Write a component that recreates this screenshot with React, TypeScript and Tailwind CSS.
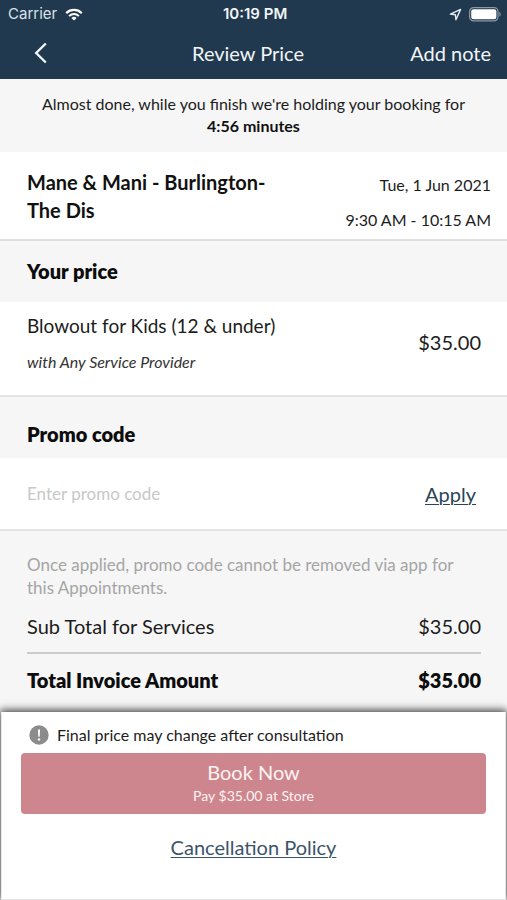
import type { ReactNode } from "react";

function StatusBar() {
  return (
    <div className="relative flex h-[26px] items-center justify-between pt-[2px] pr-[6px] pl-2 font-['Inter'] text-[15px] leading-5">
      <div className="flex items-center gap-2">
        <span className="text-[#dbe3ea]">Carrier</span>
        <svg width="18" height="13" viewBox="0 0 18 13" fill="none" stroke="white">
          <path d="M1.2 5.1a11.2 11.2 0 0 1 15.6 0" strokeWidth="2.2" />
          <path d="M4.1 8.1a7 7 0 0 1 9.8 0" strokeWidth="2" />
          <path d="M9 12.6 6.4 9.9a3.8 3.8 0 0 1 5.2 0z" fill="white" stroke="none" />
        </svg>
      </div>
      <span className="absolute left-[223px] font-semibold">10:19 PM</span>
      <div className="flex items-center gap-[7px]">
        <svg width="13" height="13" viewBox="0 0 13 13" fill="none" stroke="#e6ecf1" strokeWidth="1.4" strokeLinejoin="round">
          <path d="M11.6 1.4 1.4 6.1l5 .6.5 5z" />
        </svg>
        <svg width="32" height="15" viewBox="0 0 32 15" fill="none">
          <rect x=".6" y=".6" width="28.4" height="13.3" rx="4" stroke="#8a99a7" strokeWidth="1.2" />
          <rect x="2.2" y="2.2" width="25.2" height="10.1" rx="2.4" fill="white" />
          <path d="M30.3 5v4.6c.8-.3 1.4-1.200 1.400-2.300S31.100 5.300 30.300 5z" fill="#8a99a7" />
        </svg>
      </div>
    </div>
  );
}

function SectionTitle({ children }: { children: ReactNode }) {
  return <h2 className="text-[20px] leading-6 font-extrabold text-[#0c0c0c]">{children}</h2>;
}

export default function App() {
  return (
    <div className="flex h-[900px] w-[507px] flex-col overflow-hidden bg-[#f6f6f6] font-['Lato',sans-serif] text-[#1c1c1c]">
      <header className="h-[79px] shrink-0 bg-[#21394f] text-[#f1f5f8]">
        <StatusBar />
        <div className="relative flex h-[53px] items-center justify-between pr-4 pl-[34px] text-[20px]">
          <svg width="13" height="22" viewBox="0 0 13 22" fill="none" stroke="currentColor" strokeWidth="2.400">
            <path d="M11.800 1.500 2.200 11l9.600 9.500" />
          </svg>
          <h1 className="absolute left-[192px]">Review Price</h1>
          <button>Add note</button>
        </div>
      </header>

      <div className="h-[73px] shrink-0 pt-[14px] text-center text-[16px] leading-[22px]">
        <p>Almost done, while you finish we're holding your booking for</p>
        <p className="font-bold text-[#111]">4:56 minutes</p>
      </div>

      {/* Venue and time slot */}
      <div className="flex h-[89px] shrink-0 justify-between border-b-2 border-[#dfdfdf] bg-white pr-4 pl-[27px]">
        <h2 className="pt-4 text-[20px] leading-7 font-bold whitespace-nowrap text-[#111]">
          Mane &amp; Mani - Burlington-
          <br />
          The Dis
        </h2>
        <div className="pt-[15px] text-right text-[16px] leading-[35px]">
          <p>Tue, 1 Jun 2021</p>
          <p>9:30 AM - 10:15 AM</p>
        </div>
      </div>

      <div className="h-[61px] shrink-0 pt-[18px] pl-[27px]">
        <SectionTitle>Your price</SectionTitle>
      </div>

      <div className="flex h-[95px] shrink-0 justify-between border-b-2 border-[#e3e3e3] bg-white pr-[26px] pl-[27px]">
        <div>
          <p className="pt-3 text-[19px] leading-6">Blowout for Kids (12 &amp; under)</p>
          <p className="pt-[14px] text-[16px] leading-5 text-[#333] italic">with Any Service Provider</p>
        </div>
        <p className="pt-7 text-[20px] leading-6">$35.00</p>
      </div>

      <div className="h-[61px] shrink-0 pt-[25px] pl-[27px]">
        <SectionTitle>Promo code</SectionTitle>
      </div>

      <div className="flex h-[73px] shrink-0 items-center justify-between border-b-2 border-[#e3e3e3] bg-white pr-[31px] pl-[27px]">
        <input className="w-60 text-[17px] outline-none placeholder:text-[#c8c8c8]" placeholder="Enter promo code" />
        <button className="text-[20px] text-[#2b4356] underline decoration-1 underline-offset-2">Apply</button>
      </div>

      <div className="flex grow flex-col pr-[26px] pl-[27px]">
        <p className="pt-[22px] text-[17px] leading-[23px] whitespace-nowrap text-[#a5a5a5]">
          Once applied, promo code cannot be removed via app for
          <br />
          this Appointments.
        </p>
        <div className="mt-[15px] flex h-[40px] justify-between border-b-2 border-[#cbcbcb] text-[20px] leading-6">
          <span>Sub Total for Services</span>
          <span>$35.00</span>
        </div>
        <div className="mt-[14px] flex justify-between text-[20px] leading-6 font-extrabold text-[#0c0c0c]">
          <span>Total Invoice Amount</span>
          <span>$35.00</span>
        </div>
      </div>

      {/* Bottom sheet */}
      <footer className="mx-px flex h-[188px] shrink-0 flex-col border-x border-b border-[#e6e6e6] bg-white px-[19px] pt-[13px] shadow-[0_-1px_8px_1px_rgba(0,0,0,0.75)]">
        <div className="flex items-center gap-2 pl-2 text-[16px] leading-5">
          <svg width="20" height="20" viewBox="0 0 20 20">
            <circle cx="10" cy="10" r="9.700" fill="#8c8c8c" />
            <path d="M8.900 4.600h2.200l-.4 7.200H9.300z" fill="white" />
            <circle cx="10" cy="14.400" r="1.200" fill="white" />
          </svg>
          <span>Final price may change after consultation</span>
        </div>
        <button className="mt-2 h-[61px] w-full shrink-0 rounded-[4px] bg-[#cd868e] text-[#fff3f3]">
          <span className="block text-[20px] leading-6">Book Now</span>
          <span className="block text-[14px] leading-6">Pay $35.00 at Store</span>
        </button>
        <button className="mt-[21px] self-center text-[20px] leading-6 text-[#3c5468] underline decoration-1 underline-offset-2">
          Cancellation Policy
        </button>
      </footer>
    </div>
  );
}
